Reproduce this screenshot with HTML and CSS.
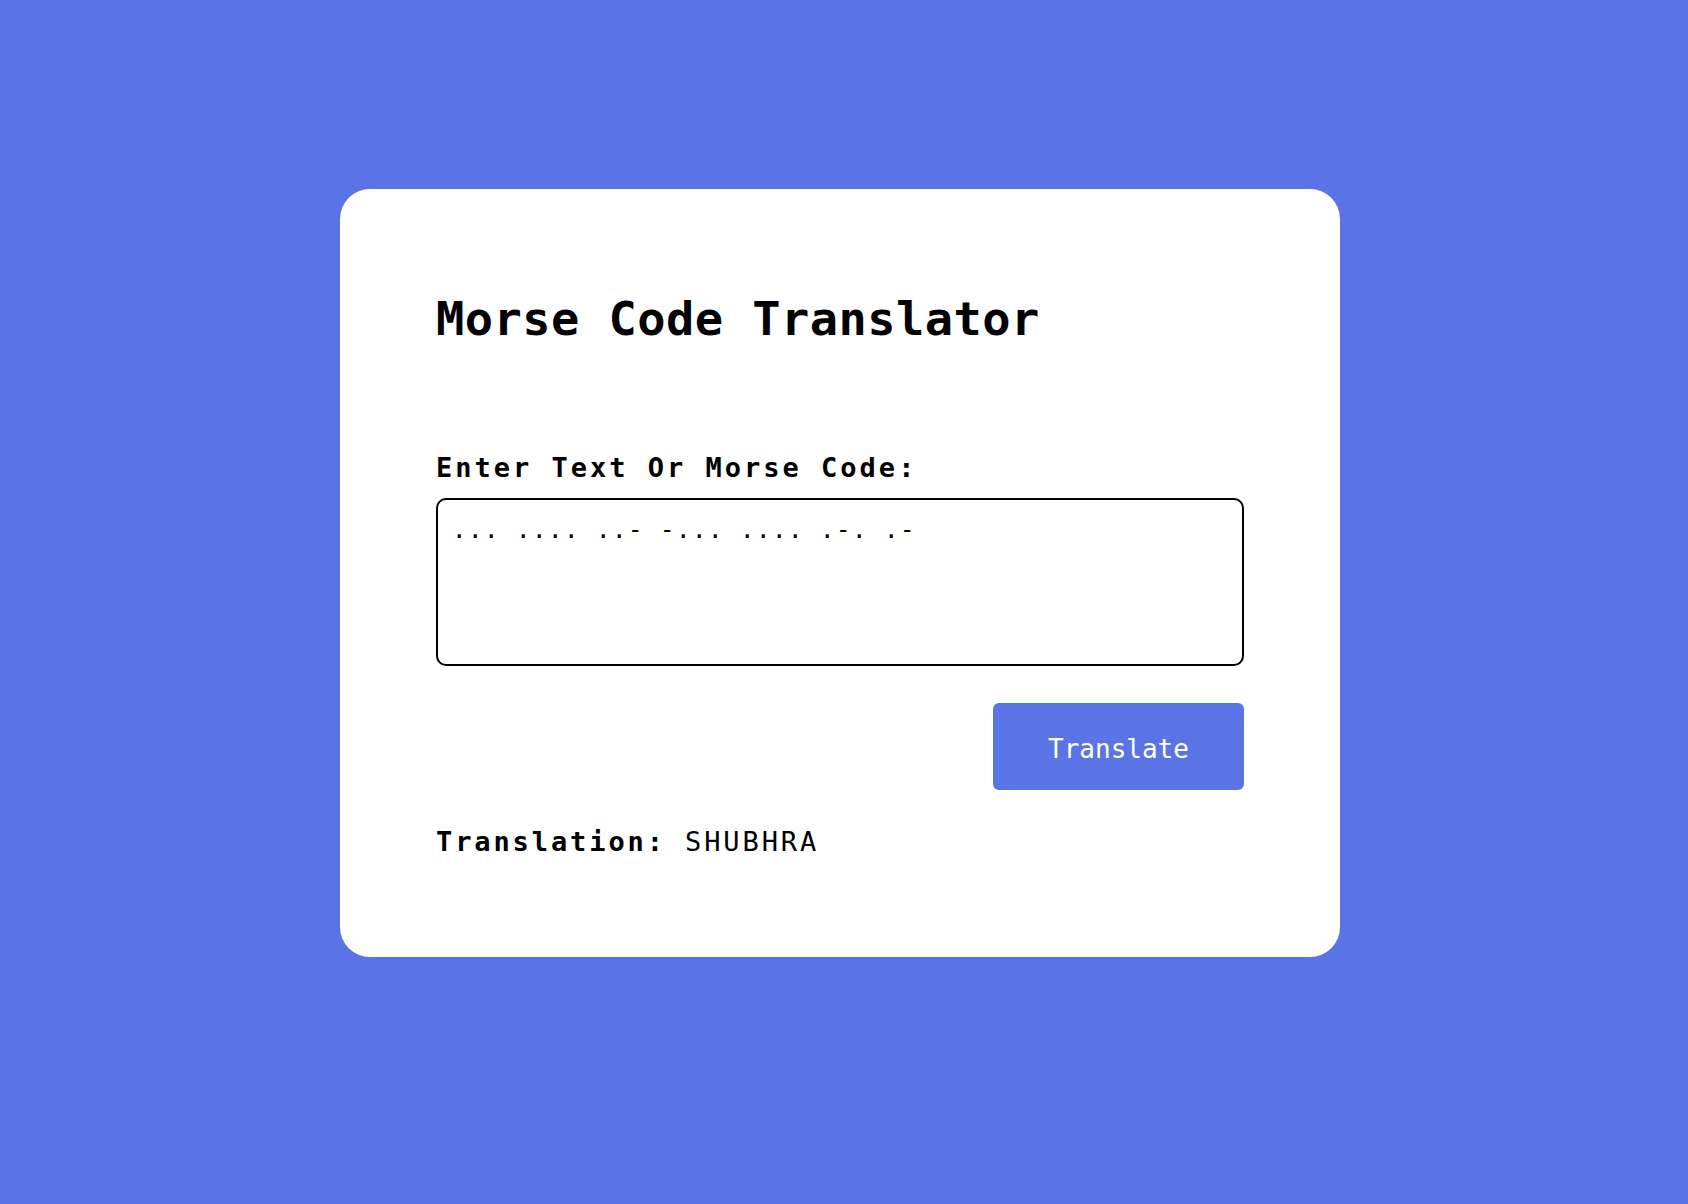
FILE: index.html
```html
<!DOCTYPE html>
<html lang="en">
<head>
<meta charset="utf-8">
<title>Morse Code Translator</title>
<link rel="stylesheet" href="styles.css">
</head>
<body>
<main class="card">
  <h1 class="title">Morse Code Translator</h1>
  <label class="label" for="input">Enter Text Or Morse Code:</label>
  <textarea id="input" class="input">... .... ..- -... .... .-. .-</textarea>
  <div class="actions">
    <button class="btn" type="button">Translate</button>
  </div>
  <p class="result"><strong class="result-label">Translation:</strong> SHUBHRA</p>
</main>
</body>
</html>
```

FILE: styles.css
```css
html, body {
  margin: 0;
  background: #5a74e6;
}
body {
  padding: 189px 0 0 340px;
  min-height: 1204px;
  box-sizing: border-box;
  font-family: "DejaVu Sans Mono", "Liberation Mono", monospace;
  color: #000;
}
.card {
  width: 1000px;
  box-sizing: border-box;
  background: #fff;
  border-radius: 30px;
  padding: 102px 96px 98px;
  display: flex;
  flex-direction: column;
}
.title {
  margin: 0 0 104px;
  font-size: 47px;
  line-height: 56px;
  font-weight: 700;
  letter-spacing: 0.45px;
}
.label {
  display: block;
  margin: 0 0 13px;
  font-size: 27px;
  line-height: 34px;
  font-weight: 700;
  letter-spacing: 3px;
}
.input {
  display: block;
  width: 100%;
  height: 168px;
  box-sizing: border-box;
  border: 2px solid #000;
  border-radius: 10px;
  padding: 16px 14px 14px;
  margin: 0;
  font-family: inherit;
  font-size: 24px;
  line-height: 28px;
  letter-spacing: 1.55px;
  color: #000;
  resize: none;
  outline: none;
}
.actions {
  display: flex;
  justify-content: flex-end;
  margin: 37px 0 35px;
}
.btn {
  width: 251px;
  height: 87px;
  border: none;
  border-radius: 6px;
  background: #5a74e6;
  color: #fff;
  font-family: inherit;
  font-size: 26px;
  padding: 4px 0 0;
  cursor: pointer;
}
.result {
  margin: 0;
  font-size: 27px;
  line-height: 34px;
  letter-spacing: 2.9px;
}
.result-label {
  font-weight: 700;
}
```
